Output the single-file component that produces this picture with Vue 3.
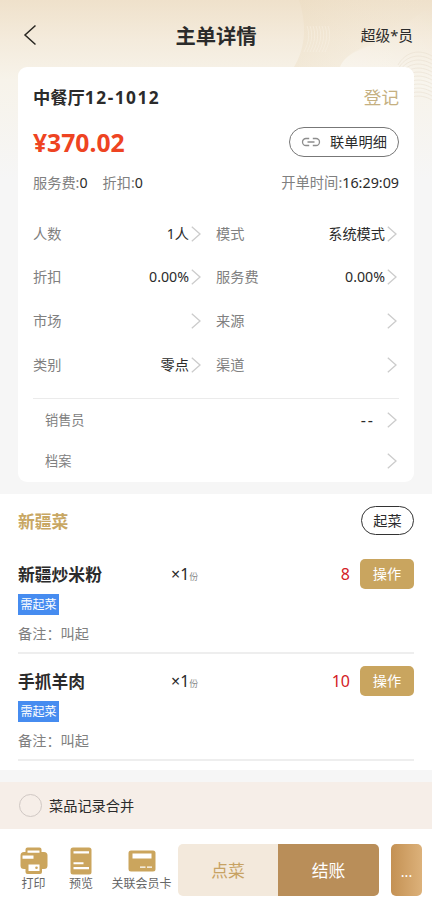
<script setup>
const fields = [
  { label: '人数', value: '1人' },
  { label: '模式', value: '系统模式' },
  { label: '折扣', value: '0.00%' },
  { label: '服务费', value: '0.00%' },
  { label: '市场', value: '' },
  { label: '来源', value: '' },
  { label: '类别', value: '零点' },
  { label: '渠道', value: '' },
]
const extras = [
  { label: '销售员', value: '--' },
  { label: '档案', value: '' },
]
const dishes = [
  { name: '新疆炒米粉', qty: '×1', unit: '份', price: '8' },
  { name: '手抓羊肉', qty: '×1', unit: '份', price: '10' },
]
const waves = Array.from({ length: 8 }, (_, i) => i * 3)
const arcs = Array.from({ length: 12 }, (_, i) => i * 4)
</script>

<template>
  <main class="page">
    <svg class="backdrop" width="432" height="122" viewBox="0 0 432 122" aria-hidden="true">
      <defs>
        <linearGradient id="swirl" x1="0" x2="1">
          <stop offset="0" stop-color="#ead9bb" stop-opacity=".34" />
          <stop offset="1" stop-color="#f3e8d5" stop-opacity="0" />
        </linearGradient>
        <linearGradient id="sheen" x1="0" x2="1" y1="1" y2="0">
          <stop offset="0" stop-color="#fff" stop-opacity=".3" />
          <stop offset="1" stop-color="#fff" stop-opacity="0" />
        </linearGradient>
      </defs>
      <path d="M299 0C306 22 307 46 294 67H340C348 48 374 46 390 30L432 0Z" fill="url(#swirl)" />
      <path d="M340 67C346 52 366 48 385 40C400 33 415 12 432 8V90H340Z" fill="url(#sheen)" />
      <g fill="none" stroke="#fbf5ea" stroke-width=".7" opacity=".6">
        <path v-for="w in waves" :key="w" :d="`M${307 + w} 26C${310 + w} 34 ${309 + w} 42 ${304 + w} 52`" />
      </g>
      <g fill="none" stroke="#e5dac8" stroke-width=".7" opacity=".6">
        <path v-for="a in arcs" :key="a" :d="`M398 ${65 + a}C406 ${51 + a} 420 ${49 + a} 432 ${56 + a}`" />
      </g>
    </svg>

    <header class="nav">
      <svg class="back" width="14" height="22" viewBox="0 0 14 22"><path d="M12.500 1.500 2 11l10.500 9.500" /></svg>
      <h1>主单详情</h1>
      <span class="user">超级*员</span>
    </header>

    <section class="card">
      <div class="row title-row">
        <b class="room">中餐厅<span>12-1012</span></b>
        <span class="status">登记</span>
      </div>
      <div class="row price-row">
        <b class="total">¥370.02</b>
        <button class="link-btn">
          <svg width="20" height="10" viewBox="0 0 20 10"><path d="M8.200 1.500H5a3.500 3.500 0 0 0 0 7h3.200M11.800 1.500H15a3.500 3.500 0 0 1 0 7h-3.200M6.500 5h7" /></svg>
          <span>联单明细</span>
        </button>
      </div>
      <div class="row fee-row">
        <div class="fees"><span>服务费:<i>0</i></span><span>折扣:<i>0</i></span></div>
        <span class="time">开单时间:<i>16:29:09</i></span>
      </div>
      <div class="fields">
        <div v-for="f in fields" :key="f.label" class="field">
          <label>{{ f.label }}</label>
          <span class="val">{{ f.value }}</span>
          <svg class="chev" width="10" height="16" viewBox="0 0 10 16"><path d="m.8.800 8.200 7.200-8.200 7.200" /></svg>
        </div>
      </div>
      <div class="extras">
        <div v-for="e in extras" :key="e.label" class="extra">
          <label>{{ e.label }}</label>
          <span class="val">{{ e.value }}</span>
          <svg class="chev" width="10" height="16" viewBox="0 0 10 16"><path d="m.8.800 8.200 7.200-8.200 7.200" /></svg>
        </div>
      </div>
    </section>

    <section class="dishes">
      <div class="group">
        <b>新疆菜</b>
        <button class="serve">起菜</button>
      </div>
      <article v-for="d in dishes" :key="d.name" class="dish">
        <div class="dish-line">
          <b class="dish-name">{{ d.name }}</b>
          <span class="qty">{{ d.qty }}<small>{{ d.unit }}</small></span>
          <span class="price">{{ d.price }}</span>
          <button class="op">操作</button>
        </div>
        <span class="tag">需起菜</span>
        <p class="note">备注：叫起</p>
      </article>
    </section>

    <div class="merge"><span class="radio"></span><span>菜品记录合并</span></div>

    <footer class="bar">
      <div class="tool print">
        <svg width="28" height="28" viewBox="0 0 28 28">
          <path class="solid" d="M7.500 .5h12a2 2 0 0 1 2 2V5h2.500a3.500 3.500 0 0 1 3.500 3.500V18.500a3.500 3.500 0 0 1-3.500 3.500h-2v3a2 2 0 0 1-2 2H7.500a2 2 0 0 1-2-2v-3H4A3.500 3.500 0 0 1 .5 18.500V8.500A3.500 3.500 0 0 1 4 5h1.500V2.500a2 2 0 0 1 2-2Z" />
          <path class="cut" d="M7.500 3.500h12v2.200h-12ZM2.500 8.500H13.500v3.200H2.500ZM8.500 17.500h11V24h-11Z" />
          <circle class="solid" cx="16.500" cy="20.800" r="1.300" />
        </svg>
        <span>打印</span>
      </div>
      <div class="tool preview">
        <svg width="22" height="28" viewBox="0 0 22 28">
          <rect class="solid" x=".5" y=".5" width="21" height="27" rx="2.500" />
          <path class="cut" d="M3.500 4.300h15.500v2.200H3.500ZM3.500 15.300h10v2h-10ZM3.500 20h15.500v2.200H3.500Z" />
        </svg>
        <span>预览</span>
      </div>
      <div class="tool member">
        <svg width="28" height="28" viewBox="0 0 28 28">
          <rect class="solid" x=".5" y="3.500" width="27" height="21" rx="2.500" />
          <path class="cut" d="M4.500 6.500h19v5h-19ZM12 19.500h5.500v1.300H12ZM19 19.500h5v1.300h-5Z" />
        </svg>
        <span>关联会员卡</span>
      </div>
      <button class="order">点菜</button>
      <button class="pay">结账</button>
      <button class="more">...</button>
    </footer>
  </main>
</template>

<style>
body { margin: 0; background: #fff; }
</style>

<style scoped>
* { box-sizing: border-box; }
.page {
  position: relative;
  width: 432px;
  height: 910px;
  overflow: hidden;
  display: flex;
  flex-direction: column;
  background: linear-gradient(#efe1cb 0, #f4ebdc 40px, #f7f3ea 80px, #f6f6f6 180px);
  font-family: "Noto Sans", "Noto Sans CJK SC", sans-serif;
  font-size: 14.200px;
  line-height: 20px;
  color: #2b2b2b;
  white-space: nowrap;
}
button { border: 0; padding: 0; font: inherit; color: inherit; display: flex; align-items: center; justify-content: center; flex: none; }
svg { flex: none; display: block; }
i { font-style: normal; color: #2b2b2b; }
.backdrop { position: absolute; top: 0; left: 0; }
.nav { position: relative; height: 67px; flex: none; display: grid; grid-template-columns: 1fr auto 1fr; align-items: center; padding: 3px 19px 0 23px; }
.back path { fill: none; stroke: #292722; stroke-width: 1.500; }
h1 { margin: 2px 4px 0 0; font-size: 20.300px; line-height: 28px; font-weight: 700; }
.user { justify-self: end; font-size: 14.700px; }
.card { position: relative; flex: none; height: 415px; margin: 0 18px; padding: 15px 15px 0; background: #fff; border-radius: 9px; }
.row { display: flex; align-items: center; justify-content: space-between; }
.title-row { height: 30px; }
.room { font-size: 17.300px; padding-top: 2px; }
.room span { letter-spacing: 1.500px; }
.status { font-size: 17.600px; color: #c5b081; }
.price-row { height: 34px; margin-top: 13px; }
.total { font-size: 24.700px; line-height: 34px; padding-top: 2px; color: #ee4422; }
.link-btn { width: 110px; height: 30px; border: 1px solid #777; border-radius: 15px; background: #fff; gap: 9px; }
.link-btn svg path { fill: none; stroke: #8d8d8d; stroke-width: 1.300; }
.fee-row { height: 24px; margin-top: 12px; color: #808080; }
.fees { display: flex; gap: 15px; }
.time { font-size: 14.300px; }
.fields { display: grid; grid-template-columns: 170px 184px; column-gap: 13px; grid-auto-rows: 43.600px; margin-top: 17px; height: 187px; border-bottom: 1px solid #ebebeb; }
.field { display: flex; align-items: center; min-width: 0; }
label { color: #808080; }
.val { margin-left: auto; }
.field .chev { margin: 0 2px; }
.field:nth-child(even) .chev { margin-right: 3px; }
.chev path { fill: none; stroke: #ccc; stroke-width: 1.300; }
.extra { height: 41.500px; display: flex; align-items: center; padding-left: 12px; font-size: 13.200px; }
.extra .chev { margin: 0 2px 0 12px; }
.extra .val { font-size: 16px; letter-spacing: 2px; }
.dishes { position: relative; flex: none; height: 276px; margin-top: 12px; padding: 12px 18px 0; background: #fff; }
.group { display: flex; justify-content: space-between; align-items: center; height: 29px; color: #c8a763; font-size: 16.800px; }
.group b { padding-top: 2px; }
.serve { width: 53px; height: 29px; border: 1.500px solid #333; border-radius: 15px; background: #fff; color: #2b2b2b; font-size: 14.200px; }
.dish { height: 107px; border-bottom: 2px solid #eee; padding-top: 12px; }
.group + .dish { height: 119px; padding-top: 24px; }
.dish-line { display: grid; grid-template-columns: 153px 1fr auto 54px; align-items: center; height: 30px; }
.dish-name { font-size: 16.800px; padding-top: 2px; }
.qty { font-size: 16px; padding-top: 2px; }
.qty small { font-size: 9px; color: #888; }
.price { font-size: 16px; color: #d32026; margin-right: 10px; }
.op { width: 54px; height: 30px; border-radius: 5px; background: #c9a55f; color: #fff; }
.tag { display: block; width: 41px; height: 21px; margin-top: 5px; background: #468cf0; color: #fff; text-align: center; font-size: 12px; line-height: 22px; }
.note { margin: 9px 0 0; color: #808080; }
.merge { flex: none; height: 47px; margin-top: 12px; padding-left: 19px; display: flex; align-items: center; gap: 7px; background: #f6eee8; }
.radio { width: 23px; height: 23px; border: 1.500px solid #d0c8c4; border-radius: 50%; }
.bar { flex: 1; background: #fff; display: flex; padding-top: 15px; }
.tool { display: flex; flex-direction: column; align-items: center; font-size: 12px; line-height: 15px; color: #666; padding-top: 3px; height: 52px; }
.tool span { margin-top: 1px; }
.print { width: 47px; margin-left: 10px; }
.preview { width: 48px; }
.member { width: 73px; }
.solid { fill: #cba55d; }
.cut { fill: #fff; }
.order { width: 100px; height: 52px; padding-top: 2px; border-radius: 5px 0 0 5px; background: #f3e9dc; color: #c7a263; font-size: 16.800px; }
.pay { width: 101px; height: 52px; padding-top: 2px; border-radius: 0 5px 5px 0; background: #b98e59; color: #fff; font-size: 16.800px; }
.more { width: 31px; height: 52px; padding-top: 3px; margin-left: 12px; border-radius: 5px; background: linear-gradient(90deg, #c49153, #dcb17a); color: #fff; }
</style>
